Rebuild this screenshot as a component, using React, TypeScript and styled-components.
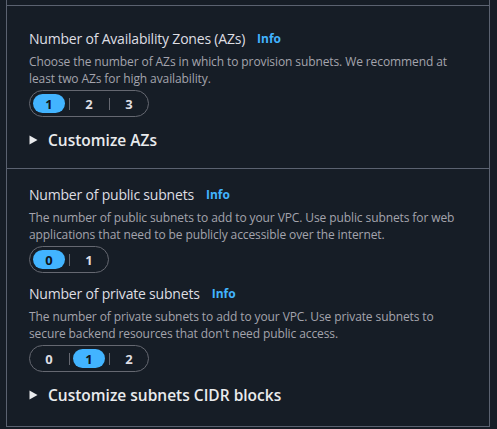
import styled, { createGlobalStyle } from "styled-components";

const GlobalStyle = createGlobalStyle`
    html, body {
        margin: 0;
        padding: 0;
        background-color: #161d26;
    }
    * {
        box-sizing: border-box;
    }
`

const Segmented = ({ options, selected }: { options: string[]; selected: number }) => {
    return (
        <Control>
            {options.map((opt, i) => (
                <Item key={opt}>
                    {i > 0 && <Divider />}
                    <Option active={i === selected}>{opt}</Option>
                </Item>
            ))}
        </Control>
    )
}

const Expander = ({ title }: { title: string }) => {
    return (
        <ExpandHeader>
            <svg width="9" height="10" viewBox="0 0 9 10">
                <path d="M0.5 0.5 L8.5 5 L0.5 9.5 Z" fill="#e9ebed" />
            </svg>
            <span>{title}</span>
        </ExpandHeader>
    )
}

const Field = ({ label, description, children }: any) => {
    return (
        <FieldWrap>
            <LabelRow>
                <Label>{label}</Label>
                <InfoLink>Info</InfoLink>
            </LabelRow>
            <Description>{description}</Description>
            {children}
        </FieldWrap>
    )
}

const App = () => {
    return (
        <>
            <GlobalStyle />
            <Panel>
                <Stub />
                <Section top={22} bottom={17}>
                    <Field
                        label="Number of Availability Zones (AZs)"
                        description="Choose the number of AZs in which to provision subnets. We recommend at least two AZs for high availability."
                    >
                        <Segmented options={["1", "2", "3"]} selected={0} />
                    </Field>
                    <Expander title="Customize AZs" />
                </Section>
                <Section top={15} bottom={20} last>
                    <Field
                        label="Number of public subnets"
                        description="The number of public subnets to add to your VPC. Use public subnets for web applications that need to be publicly accessible over the internet."
                    >
                        <Segmented options={["0", "1"]} selected={0} />
                    </Field>
                    <Field
                        label="Number of private subnets"
                        description="The number of private subnets to add to your VPC. Use private subnets to secure backend resources that don't need public access."
                    >
                        <Segmented options={["0", "1", "2"]} selected={1} />
                    </Field>
                    <Expander title="Customize subnets CIDR blocks" />
                </Section>
            </Panel>
        </>
    )
}

const Panel = styled.div`
    width: 484px;
    margin-left: 6px;
    border-left: 1px solid #5b6270;
    border-right: 1px solid #5b6270;
    font-family: "Open Sans", "Noto Sans", sans-serif;
`
const Stub = styled.div`
    height: 5px;
`
const Section = styled.div<{ top: number; bottom: number; last?: boolean }>`
    display: flex;
    flex-direction: column;
    align-items: flex-start;
    gap: 10px;
    padding: ${props => props.top}px 20px ${props => props.bottom}px 22px;
    border-top: 1px solid #5b6270;
    border-bottom: ${props => props.last ? "1px solid #5b6270" : "none"};
`
const FieldWrap = styled.div`
    display: flex;
    flex-direction: column;
    align-items: flex-start;
`
const LabelRow = styled.div`
    display: flex;
    align-items: center;
    gap: 12px;
    height: 20px;
`
const Label = styled.span`
    font-size: 14px;
    color: #dedee3;
    letter-spacing: -0.2px;
`
const InfoLink = styled.span`
    font-size: 12px;
    font-weight: 700;
    color: #42b4ff;
    cursor: pointer;
`
const Description = styled.p`
    margin: 5px 0 3px;
    font-size: 12px;
    line-height: 17px;
    color: #a4a4ad;
    letter-spacing: -0.1px;
`
const Control = styled.div`
    display: inline-flex;
    align-items: center;
    height: 27px;
    padding: 0 3px;
    border: 1px solid #656871;
    border-radius: 14px;
`
const Item = styled.div`
    display: flex;
    align-items: center;
`
const Divider = styled.span`
    width: 1px;
    height: 12px;
    margin: 0 3px 0 4px;
    background-color: #656871;
`
const Option = styled.button<{ active: boolean }>`
    width: 32px;
    height: 19px;
    padding: 0;
    border: none;
    border-radius: 10px;
    font-family: inherit;
    font-size: 13px;
    font-weight: 700;
    color: ${props => props.active ? "#0f141a" : "#dedee3"};
    background-color: ${props => props.active ? "#42b4ff" : "transparent"};
    cursor: pointer;
`
const ExpandHeader = styled.div`
    display: flex;
    align-items: center;
    gap: 10px;
    height: 22px;
    margin-top: 2px;
    font-size: 15.5px;
    font-weight: 600;
    color: #e9ebed;
    cursor: pointer;
`

export default App;
